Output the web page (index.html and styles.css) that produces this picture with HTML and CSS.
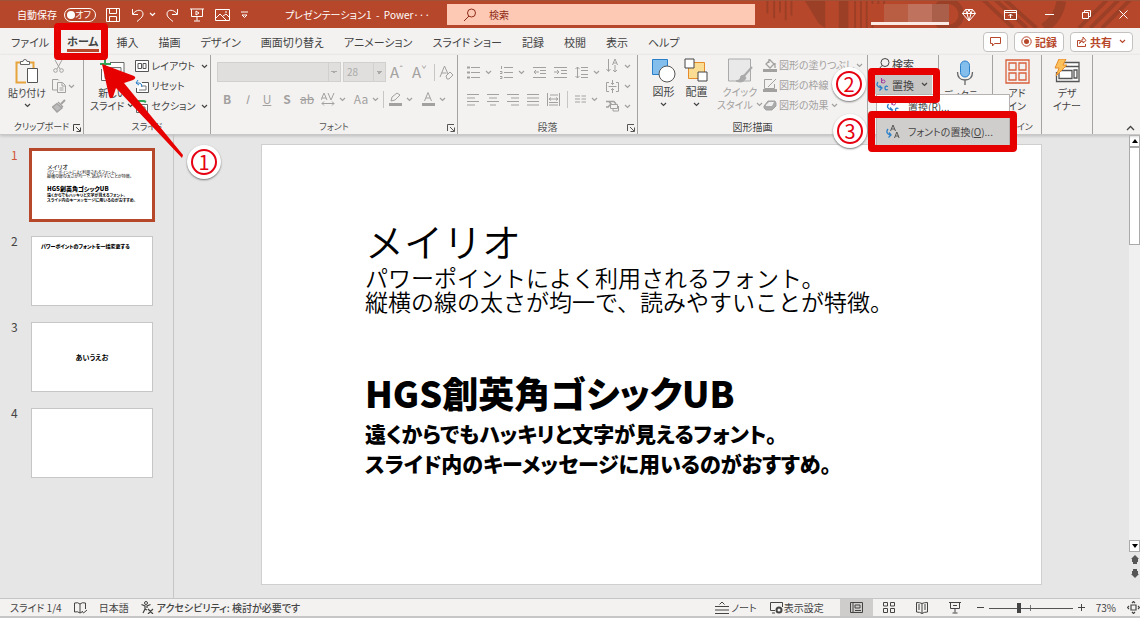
FILE: index.html
```
<!DOCTYPE html>
<html lang="ja">
<head>
<meta charset="utf-8">
<title>プレゼンテーション1 - PowerPoint</title>
<link rel="stylesheet" href="styles.css">
</head>
<body>
<svg class="defs" aria-hidden="true">
  <symbol id="chev" viewBox="0 0 7 5"><path d="M1 1l2.500 2.500L6 1" fill="none" stroke="currentColor" stroke-width="1.200"/></symbol>
  <symbol id="launch" viewBox="0 0 8 8"><path d="M.5 7V.5H7M3 3l4 4M7.500 3.500v4h-4" fill="none" stroke="currentColor"/></symbol>
</svg>
<div class="app">
  <header class="titlebar">
    <svg class="pattern" viewBox="0 0 400 28" aria-hidden="true">
      <g fill="none" stroke="#9c3f27" stroke-width="3">
        <path d="M21 0v13M28 0v18M34 0v12M40 0v20M46 0v15" stroke-width="2"/>
        <path d="M112 0v28M118 0v28M124 0v28M130 0v28M136 0v22M142 0v10" stroke-width="2"/>
        <path d="M252 -6l38 34M262 -6l38 34M242 -4l34 32" stroke-width="4"/>
        <path d="M344 28l32-32M356 28l32-32M368 28l32-32" stroke-width="4"/>
      </g>
      <path d="M60 0l14 23 7 5V0zM95 0h10v28H95z" fill="#9c3f27"/>
      <circle cx="208" cy="14" r="14" fill="none" stroke="#9c3f27" stroke-width="6"/>
      <path d="M326 0q-3 18-18 28" fill="none" stroke="#9c3f27" stroke-width="10"/>
    </svg>
    <div class="quick">
      <label class="autosave" for="autosave">自動保存</label>
      <span class="switch"><input type="checkbox" id="autosave"><span>オフ</span></span>
      <button class="tool" aria-label="保存"><svg width="14" height="14" viewBox="0 0 14 14"><path d="M.5.5h13v13H.5zM3.500.5v5h7v-5M3.500 13.500v-5h7v5" /></svg></button>
      <button class="tool undo" aria-label="元に戻す"><svg width="14" height="14" viewBox="0 0 14 14"><path d="M1.500 1v5.500H7M2 6C5 1 12 1 12 6c0 3-3 5-6 7.500"/></svg><svg width="7" height="5"><use href="#chev"/></svg></button>
      <button class="tool" aria-label="やり直し"><svg width="14" height="14" viewBox="0 0 14 14"><path d="M12.500 1v5.500H7M12 6C9 1 2 1 2 6c0 3 3 5 6 7.500"/></svg></button>
      <button class="tool" aria-label="スライドショー"><svg width="14" height="14" viewBox="0 0 14 14"><path d="M0 1h14M1.500 1v7.500h11V1M7 8.500v4M4 13h6M6 3v4l3-2z"/></svg></button>
      <button class="tool" aria-label="図"><svg width="15" height="14" viewBox="0 0 15 14"><path d="M.5 1.500h14v11H.5zM1 10l4-4 6 6M8 8l3-2 3 3M10 4h2"/></svg></button>
      <button class="tool" aria-label="カスタマイズ"><svg width="7" height="8" viewBox="0 0 7 8"><path d="M0 1h7M1 4l2.500 2.500L6 4z"/></svg></button>
    </div>
    <h1 class="doc">プレゼンテーション1 &nbsp;-&nbsp; Power···</h1>
    <div class="search"><svg width="14" height="14" viewBox="0 0 14 14"><circle cx="8.500" cy="5" r="4" fill="none" stroke="#8e2b16"/><path d="M6 8l-5 5" stroke="#8e2b16"/></svg><input type="search" placeholder="検索" aria-label="検索"></div>
    <div class="window">
      <span class="user"></span>
      <button class="tool" aria-label="Premium"><svg width="14" height="14" viewBox="0 0 14 14"><path d="M3.500 1.500h7l3 4L7 13 .5 5.500zM.5 5.500h13M3.500 1.500L5 5.500 7 13l2-7.500 1.500-4M5 5.500l2-4 2 4" /></svg></button>
      <button class="tool" aria-label="リボンの表示オプション"><svg width="13" height="10" viewBox="0 0 13 10"><path d="M.5.5h12v9H.5zM.5 2.500h12M6.500 8V4M4.500 6l2-2 2 2"/></svg></button>
      <button class="tool" aria-label="最小化"><svg width="9" height="10" viewBox="0 0 9 10"><path d="M0 4.500h9"/></svg></button>
      <button class="tool" aria-label="元に戻す(縮小)"><svg width="9" height="9" viewBox="0 0 9 9"><path d="M.5 2.500h6v6h-6zM2.500 2.500v-2h6v6h-2"/></svg></button>
      <button class="tool" aria-label="閉じる"><svg width="9" height="9" viewBox="0 0 9 9"><path d="M.5.5l8 8M8.500.5l-8 8"/></svg></button>
    </div>
  </header>

  <nav class="tabs">
    <button>ファイル</button><button class="on"><span>ホーム</span></button><button>挿入</button><button>描画</button><button>デザイン</button><button>画面切り替え</button><button>アニメーション</button><button>スライド ショー</button><button>記録</button><button>校閲</button><button>表示</button><button>ヘルプ</button>
    <div class="actions">
      <button aria-label="コメント"><svg width="11" height="10" viewBox="0 0 11 10"><path d="M.5.5h10v6h-6L2.500 9V6.500h-2z" fill="none" stroke="currentColor"/></svg></button>
      <button><svg width="11" height="11" viewBox="0 0 11 11"><circle cx="5.500" cy="5.500" r="4.700" fill="none" stroke="currentColor"/><circle cx="5.500" cy="5.500" r="2.500" fill="currentColor"/></svg>記録</button>
      <button><svg width="10" height="11" viewBox="0 0 10 11"><path d="M3 4.500H.5v6h8V8M2.500 7.500Q3 3.500 6 3.500V1l3 3.500L6 7V5Q4 5 2.500 7.500z" fill="none" stroke="currentColor"/></svg>共有<svg class="gap" width="7" height="5"><use href="#chev"/></svg></button>
    </div>
  </nav>

  <section class="ribbon">
    <div class="group kana">
      <div class="body">
        <button class="big"><svg width="24" height="25" viewBox="0 0 24 25"><path d="M7 3.500H1.500v20H11M13 3.500h5.500V9" fill="none" stroke="#e8a33d" stroke-width="2"/><path d="M5.500 5.500v-3h2.500a2 2 0 0 1 4 0h2.500v3z" fill="#fff" stroke="#666"/><path d="M12.500 9.500h10v14h-10z" fill="#fff" stroke="#555"/></svg>貼り付け<svg width="7" height="5"><use href="#chev"/></svg></button>
        <div class="stack dim">
          <button aria-label="切り取り"><svg width="13" height="14" viewBox="0 0 13 14"><path d="M3 1l5 9M10 1L5 10" fill="none" stroke="currentColor"/><circle cx="3.500" cy="11.500" r="1.800" fill="none" stroke="currentColor"/><circle cx="9.500" cy="11.500" r="1.800" fill="none" stroke="currentColor"/></svg></button>
          <button aria-label="コピー"><svg width="14" height="14" viewBox="0 0 14 14"><path d="M5 11H.5V.5H6l1 1M5.500 3.500h5l3 3v7h-8zM10 4v3h3M7.500 9h4M7.500 11h4" fill="none" stroke="currentColor"/></svg><svg width="7" height="5"><use href="#chev"/></svg></button>
          <button aria-label="書式のコピー"><svg width="14" height="14" viewBox="0 0 14 14"><path d="M13 1L9 5" stroke="currentColor" stroke-width="2"/><path d="M6 3l5 5M5 4.500L.5 8 5 13l5-4z" stroke="currentColor" stroke-width="1.300" fill="#bbb"/></svg></button>
        </div>
      </div>
      <div class="name">クリップボード<svg width="8" height="8"><use href="#launch"/></svg></div>
    </div>

    <div class="group kana">
      <div class="body">
        <button class="big"><svg width="26" height="25" viewBox="0 0 26 25"><path d="M11 3.500h14v18H2.500V10" fill="#fff" stroke="#666"/><path d="M6 8.500h16v4H6zM6 15.500h7v4H6zM15 15.500h7v4h-7z" fill="#eee" stroke="#777"/><path d="M6 0v10M1 5h11" stroke="#2fa455" stroke-width="2"/></svg>新しい<span>スライド <svg width="7" height="5"><use href="#chev"/></svg></span></button>
        <div class="stack">
          <button><svg width="14" height="12" viewBox="0 0 14 12"><path d="M.5.5h13v11H.5zM3 3.500h3.500v5H3zM8 3.500h3v5H8z" fill="#fff" stroke="#555"/></svg>レイアウト<svg class="gap" width="7" height="5"><use href="#chev"/></svg></button>
          <button><svg width="14" height="13" viewBox="0 0 14 13"><path d="M7 2.500h6.500v10H1.500V8" fill="#fff" stroke="#555"/><path d="M6 6h5v4H4" fill="none" stroke="#777"/><path d="M3 0L1 3l3 2M1 3h3q3 0 3 4" fill="none" stroke="#2a7fc9"/></svg>リセット</button>
          <button><svg width="14" height="13" viewBox="0 0 14 13"><path d="M1 1h8l2 1" fill="none" stroke="#2fa455" stroke-width="2"/><path d="M1.500 4.500h11v8h-11zM4 7h6v3H4z" fill="#fff" stroke="#666"/></svg>セクション<svg class="gap" width="7" height="5"><use href="#chev"/></svg></button>
        </div>
      </div>
      <div class="name">スライド</div>
    </div>

    <div class="group kana dim">
      <div class="body rows">
        <div class="row">
          <select class="face" aria-label="フォント" disabled><option></option></select>
          <select class="size" aria-label="フォント サイズ" disabled><option>28</option></select>
          <button class="lat l" aria-label="拡大">A<sup>ˆ</sup></button><button class="lat" aria-label="縮小">A<sup>ˇ</sup></button><i class="bar"></i>
          <button aria-label="書式のクリア"><svg width="15" height="15" viewBox="0 0 15 15"><path d="M1 12L5.500 1 9 9M2.500 8h5M7 11l4-4 3 3-4 4H8z" fill="none" stroke="currentColor"/></svg></button>
        </div>
        <div class="row fmt">
          <button><b>B</b></button><button><em>I</em></button><button><u>U</u></button><button><b>S</b></button><button><s>ab</s></button>
          <button class="wide" aria-label="文字の間隔"><svg width="14" height="14" viewBox="0 0 14 14"><path d="M0 8l3-7 3 7M1 6h4M7 1l3 7 3-7M1 11.500h12M3 9.500l-2 2 2 2M11 9.500l2 2-2 2" fill="none" stroke="currentColor"/></svg><svg width="7" height="5"><use href="#chev"/></svg></button>
          <button class="wide">Aa<svg width="7" height="5"><use href="#chev"/></svg></button><i class="bar"></i>
          <button class="wide" aria-label="蛍光ペン"><svg width="14" height="14" viewBox="0 0 14 14"><path d="M3 9l1-4 5-4 3 2-5 5z" fill="none" stroke="currentColor"/><path d="M1 11h13v3H1z" fill="currentColor"/></svg><svg width="7" height="5"><use href="#chev"/></svg></button>
          <button class="wide" aria-label="フォントの色"><svg width="14" height="14" viewBox="0 0 14 14"><path d="M3.500 9L7 .5 10.500 9M5 6h4" fill="none" stroke="currentColor"/><path d="M1 11h13v3H1z" fill="currentColor"/></svg><svg width="7" height="5"><use href="#chev"/></svg></button>
        </div>
      </div>
      <div class="name">フォント<svg width="8" height="8"><use href="#launch"/></svg></div>
    </div>

    <div class="group dim">
      <div class="body para">
        <div class="rows">
          <div class="row para1">
            <button aria-label="箇条書き"><svg width="13" height="13" viewBox="0 0 13 13"><path d="M0 1.500h3M0 6.500h3M0 11.500h3" stroke="currentColor" stroke-width="2"/><path d="M4 1.500h9M4 6.500h9M4 11.500h9" stroke="currentColor"/></svg><svg width="7" height="5"><use href="#chev"/></svg></button>
            <button aria-label="段落番号"><svg width="13" height="13" viewBox="0 0 13 13"><path d="M1.500 0v3M0 5.500h2v2H0M0 10.500h2v2H0M4 1.500h9M4 6.500h9M4 11.500h9" fill="none" stroke="currentColor"/></svg><svg width="7" height="5"><use href="#chev"/></svg></button>
            <button aria-label="インデントを減らす"><svg width="13" height="13" viewBox="0 0 13 13"><path d="M0 1.500h13M7 4.500h6M7 7.500h6M0 11.500h13M6 6H1M3 4L1 6l2 2" fill="none" stroke="currentColor"/></svg></button>
            <button aria-label="インデントを増やす"><svg width="13" height="13" viewBox="0 0 13 13"><path d="M0 1.500h13M7 4.500h6M7 7.500h6M0 11.500h13M0 6h5M3 4l2 2-2 2" fill="none" stroke="currentColor"/></svg></button>
            <button aria-label="行間"><svg width="13" height="13" viewBox="0 0 13 13"><path d="M2.500 1v11M.5 3l2-2 2 2M.5 10l2 2 2-2M6 1.500h7M6 4.500h7M6 8.500h7M6 11.500h7" fill="none" stroke="currentColor"/></svg><svg width="7" height="5"><use href="#chev"/></svg></button>
          </div>
          <div class="row para2">
            <button aria-label="左揃え"><svg width="13" height="13" viewBox="0 0 13 13"><path d="M0 1.500h12M0 5h8M0 8.500h12M0 12h8" stroke="currentColor"/></svg></button>
            <button aria-label="中央揃え"><svg width="13" height="13" viewBox="0 0 13 13"><path d="M0 1.500h12M2 5h8M0 8.500h12M3 12h6" stroke="currentColor"/></svg></button>
            <button aria-label="右揃え"><svg width="13" height="13" viewBox="0 0 13 13"><path d="M0 1.500h12M4 5h8M0 8.500h12M4 12h8" stroke="currentColor"/></svg></button>
            <button aria-label="両端揃え"><svg width="13" height="13" viewBox="0 0 13 13"><path d="M0 1.500h12M0 5h12M0 8.500h12M0 12h12" stroke="currentColor"/></svg></button>
            <button aria-label="均等割り付け"><svg width="13" height="13" viewBox="0 0 13 13"><path d="M.5 0v13M12.500 0v13M3 2h8M2 6h9M4 4.500L2 6l2 1.500M9 4.500L11 6 9 7.500M2 9.500h9M2 12h9" fill="none" stroke="currentColor"/></svg></button>
            <i class="bar"></i>
            <button aria-label="段組み"><svg width="11" height="9" viewBox="0 0 11 9"><path d="M0 1h5M0 4h5M0 7h5M6.500 1h5M6.500 4h5M6.500 7h5" stroke="currentColor"/></svg><svg width="7" height="5"><use href="#chev"/></svg></button>
          </div>
        </div>
        <div class="stack">
          <button aria-label="文字列の方向"><svg width="13" height="14" viewBox="0 0 13 14"><path d="M2.500 0v12M.5 10l2 2.500 2-2.500M9 6v7M7 11l2 2 2-2M6.500 6L9 0l2.500 6M7.500 4h3" fill="none" stroke="currentColor"/></svg><svg width="7" height="5"><use href="#chev"/></svg></button>
          <button aria-label="文字の配置"><svg width="13" height="13" viewBox="0 0 13 13"><path d="M3 2.500H.5v9H3M10 2.500h2.500v9H10M2.500 6.500h8M6.500 0v4.500M5 3l1.500 1.500L8 3M6.500 13V8.500M5 10l1.500-1.500L8 10" fill="none" stroke="currentColor"/></svg><svg width="7" height="5"><use href="#chev"/></svg></button>
          <button aria-label="SmartArt"><svg width="13" height="12" viewBox="0 0 13 12"><path d="M0 1.500h8l2 2.500M0 7h3M3 1.500L5 4 2 7" fill="none" stroke="currentColor" stroke-width="1.500"/><path d="M4.500 4.500h7v4h-7zM7 8v3h5.500V6" fill="none" stroke="currentColor"/></svg><svg width="7" height="5"><use href="#chev"/></svg></button>
        </div>
      </div>
      <div class="name">段落<svg width="8" height="8"><use href="#launch"/></svg></div>
    </div>

    <div class="group draw">
      <div class="body">
        <button class="big"><svg width="25" height="25" viewBox="0 0 25 25"><path d="M1.500 1.500h15v15h-15z" fill="#83beec" stroke="#2a7fc9"/><circle cx="16" cy="16" r="8" fill="#fff" stroke="#555"/></svg>図形<svg width="7" height="5"><use href="#chev"/></svg></button>
        <button class="big"><svg width="25" height="25" viewBox="0 0 25 25"><path d="M4.500 4.500h16v16h-16z" fill="#fbdc93" stroke="#e58b2a"/><path d="M1 1h9v9H1zM14 14h9v9h-9z" fill="#fff" stroke="#444"/></svg>配置<svg width="7" height="5"><use href="#chev"/></svg></button>
        <button class="big dim small"><svg width="26" height="25" viewBox="0 0 26 25"><path d="M1.500 1h22v22h-22z" fill="#e9e9e9" stroke="#aaa"/><path d="M25 9l-8 9" stroke="#aaa" stroke-width="2"/><path d="M17 17q-4 0-4 4-2 2-4 2 7 3 10-3z" fill="#aaa" stroke="#aaa"/></svg>クイック<span>スタイル <svg width="7" height="5"><use href="#chev"/></svg></span></button>
        <div class="stack dim">
          <button><svg width="14" height="13" viewBox="0 0 14 13"><path d="M7 1l4 4-4 4-4-4zM6 0v4M12 4v5" fill="none" stroke="currentColor" stroke-width="1.300"/><path d="M0 10h14v3H0z" fill="currentColor"/></svg>図形の塗りつぶし <svg width="7" height="5"><use href="#chev"/></svg></button>
          <button><svg width="14" height="13" viewBox="0 0 14 13"><path d="M9 .5H1.500v9h10V5M13 0L5 8" fill="none" stroke="currentColor"/><path d="M0 10h14v3H0z" fill="currentColor"/></svg>図形の枠線 <svg width="7" height="5"><use href="#chev"/></svg></button>
          <button><svg width="14" height="13" viewBox="0 0 14 13"><path d="M1 7l4-5h7l1 2v3l-4 4H3L1 9z" fill="#aaa" stroke="currentColor"/><path d="M3 6l3-3h5L9 7H3z" fill="#eee"/></svg>図形の効果 <svg width="7" height="5"><use href="#chev"/></svg></button>
        </div>
      </div>
      <div class="name">図形描画</div>
    </div>

    <div class="group edit">
      <div class="body">
        <div class="stack">
          <button class="find"><svg width="11" height="12" viewBox="0 0 11 12"><circle cx="6" cy="4.500" r="4" fill="none" stroke="#444"/><path d="M3 7.500L0 11" stroke="#444"/></svg>検索</button>
          <button class="swap"><svg width="13" height="14" viewBox="0 0 13 14"><path d="M5.500 0v5M5.500 3.500q0-1.500 1.800-1.500T9 3.500 7.300 5 5.500 3.500" fill="none" stroke="#a33a9e"/><path d="M2 4Q-1 8 5 10M3.500 7.500L6 10l-2.500 2.500M12 8.500q-3-1-3 1.500t3 1.500" fill="none" stroke="#2a7fc9" stroke-width="1.300"/></svg>置換<svg class="gap" width="7" height="5"><use href="#chev"/></svg></button>
        </div>
      </div>
      <div class="menu" role="menu">
        <button role="menuitem"><svg width="14" height="14" viewBox="0 0 13 14"><path d="M5.500 0v5M5.500 3.500q0-1.500 1.800-1.500T9 3.500 7.300 5 5.500 3.500" fill="none" stroke="#a33a9e"/><path d="M2 4Q-1 8 5 10M3.500 7.500L6 10l-2.500 2.500M12 8.500q-3-1-3 1.500t3 1.500" fill="none" stroke="#2a7fc9" stroke-width="1.300"/></svg><span>置換(R)...</span></button>
        <button role="menuitem" class="hot"><svg width="14" height="14" viewBox="0 0 14 14"><path d="M2 4Q-1 8 4 10M3 7.500L5 10l-2.500 2.500" fill="none" stroke="#2a7fc9" stroke-width="1.300"/><path d="M4.500 6L7 0l2.500 6M5.500 4h3M8.500 13l2.300-6 2.300 6M9.500 11h3" fill="none" stroke="#555"/></svg><span>フォントの置換(<u>O</u>)...</span></button>
      </div>
    </div>

    <div class="group">
      <div class="body mid dictate"><button class="big small"><svg width="18" height="26" viewBox="0 0 18 26"><rect x="4.500" y="1" width="9" height="16" rx="4.500" fill="#83beec" stroke="#2a7fc9"/><path d="M1.500 12q0 8 7.500 8t7.500-8M9 20v5" fill="none" stroke="#666" stroke-width="1.300"/></svg>ディクテー</button></div>
    </div>
    <div class="group kana">
      <div class="body mid"><button class="big"><svg width="25" height="25" viewBox="0 0 25 25"><path d="M1 1h23v23H1zM4 4h7v7H4zM14 4h7v7h-7zM4 14h7v7H4zM14 14h7v7h-7z" fill="none" stroke="#d9603b" stroke-width="1.300"/></svg>アド<span>イン</span></button></div>
      <div class="name">アドイン</div>
    </div>
    <div class="group kana">
      <div class="body mid"><button class="big"><svg width="26" height="25" viewBox="0 0 26 25"><path d="M6 3.500h19v19H2.500V13M10 7.500h15M5 11.500h13v8H5zM20 11h3v8h-3z" fill="#fff" stroke="#555" stroke-width="1.300"/><path d="M5 0h7L9 6h4L2 17l3-8H1z" fill="#fbc05a" stroke="#e58b2a"/></svg>デザ<span>イナー</span></button></div>
    </div>
    <div class="group last"><button aria-label="リボンを折りたたむ"><svg width="9" height="6" viewBox="0 0 9 6"><path d="M1 5l3.500-3.500L8 5" fill="none" stroke="#444" stroke-width="1.300"/></svg></button></div>
  </section>

  <main class="work">
    <ol class="thumbs">
      <li class="on"><span>1</span><div class="thumb">
        <p class="t-light">メイリオ</p><p class="t-thin">パワーポイントによく利用されるフォント。<br>縦横の線の太さが均一で、読みやすいことが特徴。</p>
        <p class="t-bold">HGS創英角ゴシックUB</p><p class="t-small">遠くからでもハッキリと文字が見えるフォント。<br>スライド内のキーメッセージに用いるのがおすすめ。</p></div></li>
      <li><span>2</span><div class="thumb"><p class="t-head">パワーポイントのフォントを一括変更する</p></div></li>
      <li><span>3</span><div class="thumb center"><p class="t-mid">あいうえお</p></div></li>
      <li><span>4</span><div class="thumb"></div></li>
    </ol>
    <div class="stage">
      <article class="slide">
        <h2 class="meiryo">メイリオ</h2>
        <p class="meiryo-text">パワーポイントによく利用されるフォント。<br>縦横の線の太さが均一で、読みやすいことが特徴。</p>
        <h2 class="hgs">HGS創英角ゴシックUB</h2>
        <p class="hgs-text">遠くからでもハッキリと文字が見えるフォント。<br>スライド内のキーメッセージに用いるのがおすすめ。</p>
      </article>
    </div>
    <div class="scroll">
      <button aria-label="上へ"><svg width="6" height="4"><path d="M0 4l3-4 3 4z"/></svg></button>
      <div class="track"><div class="knob"></div></div>
      <button aria-label="下へ"><svg width="6" height="4"><path d="M0 0l3 4 3-4z"/></svg></button>
      <button class="page" aria-label="前のスライド"><svg width="8" height="9" viewBox="0 0 8 9"><path d="M4 0l4 4H7v3H6v2H2V7H1V4H0z" fill="#555"/></svg></button>
      <button class="page" aria-label="次のスライド"><svg width="8" height="9" viewBox="0 0 8 9"><path d="M4 9l4-4H7V2H6V0H2v2H1v3H0z" fill="#555"/></svg></button>
    </div>
  </main>

  <footer class="status">
    <span>スライド 1/4</span>
    <button aria-label="校正"><svg width="13" height="12" viewBox="0 0 13 12"><path d="M6 2Q4 0 .5 1v9q3-1 5.500 1V2q2-2 5.500-1v6M6 11l2-1M8 9l1.500 2L13 8" fill="none" stroke="currentColor"/></svg></button>
    <span>日本語</span>
    <button class="a11y"><svg width="13" height="13" viewBox="0 0 13 13"><circle cx="5" cy="2" r="1.500" fill="none" stroke="currentColor"/><path d="M.5 3.500L4 5v3l-2 4M9.500 3.500L6 5v2M4 8l2 1M7 8l5 5M12 8l-5 5" fill="none" stroke="currentColor" stroke-width="1.200"/></svg>アクセシビリティ: 検討が必要です</button>
    <div class="views">
      <button class="notes"><svg width="14" height="13" viewBox="0 0 14 13"><path d="M0 5.500h14M0 9h14M0 12.500h14M4.500 3.500L7 1l2.500 2.500" fill="none" stroke="currentColor"/></svg>ノート</button>
      <button class="disp"><svg width="13" height="12" viewBox="0 0 13 12"><path d="M5 8.500H.5v-8h12V5M2 11h3" fill="none" stroke="currentColor"/><circle cx="9" cy="8" r="2.500" fill="none" stroke="currentColor" stroke-width="2"/></svg>表示設定</button>
      <button class="view on" aria-label="標準"><svg width="13" height="11" viewBox="0 0 13 11"><path d="M.5.5h12v10H.5zM3 .5v10M5 3h5v3H5zM5 8.500h6" fill="none" stroke="currentColor"/></svg></button>
      <button class="view" aria-label="スライド一覧"><svg width="12" height="11" viewBox="0 0 12 11"><path d="M.5.5h4v3.500h-4zM7.500.5h4v3.500h-4zM.5 6.500h4v4h-4zM7.500 6.500h4v4h-4z" fill="none" stroke="currentColor"/></svg></button>
      <button class="view" aria-label="閲覧表示"><svg width="12" height="12" viewBox="0 0 12 12"><path d="M6 1.500Q4 .5.500.5v9.500q3.500 0 5.500 1.500Q8 10 11.500 10V.5Q8 .5 6 1.500v10M2 3h2M2 5h2M2 7h2M8 3h2M8 5h2M8 7h2" fill="none" stroke="currentColor"/></svg></button>
      <button class="view" aria-label="スライド ショー"><svg width="12" height="12" viewBox="0 0 12 12"><path d="M0 .5h12M1.500.5v6h9v-6M6 6.500v4M3.500 11h5M4 3.500h4" fill="none" stroke="currentColor"/></svg></button>
      <button class="zoom" aria-label="縮小"><svg width="7" height="7"><path d="M0 3.500h7" stroke="currentColor"/></svg></button>
      <input type="range" min="0" max="100" value="35" aria-label="ズーム">
      <button class="zoom" aria-label="拡大"><svg width="7" height="7"><path d="M0 3.500h7M3.500 0v7" stroke="currentColor"/></svg></button>
      <span class="pct">73%</span>
      <button class="zoom" aria-label="ウィンドウに合わせる"><svg width="13" height="13" viewBox="0 0 13 13"><path d="M4 4h5v5H4zM5 2l1.500-1.500L8 2M5 11l1.500 1.500L8 11M2 5L.5 6.500 2 8M11 5l1.500 1.500L11 8" fill="none" stroke="currentColor" stroke-width="1.200"/></svg></button>
    </div>
  </footer>

  <div class="marks">
    <svg class="arrow" viewBox="0 0 86 98" aria-hidden="true"><path d="M4 4l32 12q3 2-1 4l-9 3 59 72-1 3-66-70-3 9q-3 3-4-1z" fill="#e60000"/></svg>
    <div class="box b1"></div><div class="box b2"></div><div class="box b3"></div>
    <div class="num n1"><span>1</span></div><div class="num n2"><span>2</span></div><div class="num n3"><span>3</span></div>
  </div>
</div>
</body>
</html>
```
FILE: styles.css
```
* { box-sizing: border-box; }
body { margin: 0; font: 11px/14px "Noto Sans CJK JP", "Noto Sans", sans-serif; font-feature-settings: "palt"; color: #444; }
button, input, select { font: inherit; font-feature-settings: inherit; color: inherit; }
button { border: 0; background: none; padding: 0; display: flex; align-items: center; white-space: nowrap; }
h1, h2, p, ol { margin: 0; padding: 0; }
svg { flex: none; display: block; }
.defs { position: absolute; width: 0; height: 0; }
.app { position: relative; display: flex; flex-direction: column; min-height: 100vh; overflow: hidden; background: #e6e6e6; }

.titlebar { position: relative; display: grid; grid-template-columns: 285fr 162fr 308fr 385fr; align-items: center; height: 28px; background: #b7472a; border-top: 1px solid #9f5238; color: #fff; }
.pattern { position: absolute; right: 0; top: 0; width: 400px; height: 27px; }
.quick { display: flex; align-items: center; padding-left: 17px; }
.autosave { width: 47px; font-size: 10px; }
.switch { display: flex; align-items: center; width: 32px; height: 14px; margin-right: 10px; padding: 0 4px 0 2px; border: 1px solid #fff; border-radius: 7px; font-size: 9px; justify-content: space-between; }
.switch input { appearance: none; width: 8px; height: 8px; margin: 0; border-radius: 50%; background: #fff; }
.tool { margin-right: 11px; }
.tool path { fill: none; stroke: currentColor; }
.undo { gap: 4px; margin-right: 9px; }
.doc { font-size: 10px; font-weight: 400; }
.search { position: relative; display: flex; align-items: center; gap: 12px; height: 21px; padding-left: 16px; background: #fdc9b5; color: #8e2b16; font-size: 10px; }
.search input { flex: 1; min-width: 0; border: 0; background: none; padding: 0; outline: 0; }
.search input::placeholder { color: #8e2b16; }
.window { position: relative; display: flex; align-items: center; justify-content: flex-end; gap: 28px; padding-right: 12px; }
.window .tool { margin: 0; }
.user { width: 78px; height: 21px; margin-right: -15px; border-bottom: 3px solid #fbe9e4; background: linear-gradient(90deg, #b7472a 0 13px, #b95d43 13px 37px, #bf735f 37px 61px, #a95f49 61px); }

.tabs { display: flex; align-items: center; height: 27px; padding-left: 1px; background: #f3f2f1; }
.tabs > button { height: 27px; padding: 0 10px; }
.tabs > .on { font-weight: 700; padding: 0 8px; }
.tabs .on span { border-bottom: 3px solid #b7472a; padding-top: 3px; line-height: 15px; }
.actions { display: flex; gap: 6px; margin-left: auto; padding-right: 7px; color: #b7472a; font-weight: 700; }
.actions button { height: 20px; padding: 0 6px; gap: 3px; border: 1px solid #c4c2c0; border-radius: 4px; background: #fff; }
.gap { margin-left: 4px; }

.ribbon { position: relative; z-index: 1; display: grid; grid-template-columns: 84fr 127fr 247fr 180fr 230fr 71fr 54fr 49fr 51fr 47fr; height: 80px; background: #f3f2f1; border-bottom: 1px solid #c8c8c8; box-shadow: 0 1px 3px #bbb; }
.group { position: relative; display: flex; flex-direction: column; min-width: 0; border-right: 1px solid #a5a3a1; }
.body { flex: 1; display: flex; gap: 6px; padding: 4px 6px 0 8px; }
.mid { justify-content: center; padding: 4px 0 0; }
.dictate { padding-top: 1px; }
.name { display: flex; justify-content: center; position: relative; white-space: nowrap; font-size: 10px; }
.name svg { position: absolute; right: 2px; top: 4px; }
.kana, .kana .name, .kana .big, .small { font-size: 10px; }
.kana .name { font-size: 9px; }
.big { flex-direction: column; align-items: center; justify-content: flex-start; line-height: 13px; color: #444; }
.big > svg:first-child { margin-bottom: 2px; }
.big > svg:last-child { margin-top: 4px; }
.big span { display: flex; align-items: center; gap: 3px; }
.stack { display: flex; flex-direction: column; gap: 6px; }
.stack button { gap: 2px; height: 14px; }
.dim, .dim .big, .dim button, .dim.big { color: #a3a1a0; }
.dim .name { color: #555; }
.rows { display: flex; flex-direction: column; gap: 7px; padding: 7px 0 0 6px; }
.row { display: flex; align-items: center; gap: 4px; height: 20px; }
.row select { appearance: none; height: 20px; border: 1px solid #d2d0ce; border-radius: 0; background: linear-gradient(45deg, transparent 50%, #aaa 50%) right 6px center / 3px 3px no-repeat, linear-gradient(135deg, #aaa 50%, transparent 50%) right 3px center / 3px 3px no-repeat, linear-gradient(#d2d0ce, #d2d0ce) right 11px center / 1px 100% no-repeat, #e1dfdd; color: #aaa; padding: 0 3px; margin: 0; opacity: 1; }
.row .face { width: 124px; margin-right: -2px; }
.row .size { width: 43px; }
.lat { width: 18px; font-size: 15px; }
.lat sup { font-size: 9px; line-height: 9px; align-self: flex-start; }
.bar { width: 1px; height: 17px; background: #c8c6c4; }
.fmt { gap: 0; }
.fmt button { width: 20px; justify-content: center; font-size: 12px; }
.fmt .wide { width: 33px; gap: 4px; }
.para { justify-content: space-between; padding: 0 10px 0 9px; }
.para .rows { padding: 7px 0 0; }
.para button { gap: 5px; }
.para .row { gap: 7px; }
.para .para1 { gap: 8px; }
.para .stack { padding-top: 4px; }
.kana:nth-child(2) .body { padding-right: 2px; gap: 1px; }
.kana:nth-child(2) .big { margin-left: -2px; }
.draw .body { padding: 3px 0 0 13px; gap: 8px; }
.draw .stack { margin-left: -8px; font-size: 10px; }
.edit { z-index: 1; }
.edit .body { padding: 2px 6px 0; }
.edit .stack { gap: 4px; width: 100%; }
.find { padding-left: 5px; }
.stack .swap { height: 19px; padding: 0 2px; gap: 3px; background: #c8c6c4; }
.menu { position: absolute; top: 39px; left: 8px; width: 134px; background: #fff; border: 1px solid #b5b3b1; font-size: 10px; }
.menu button { width: 100%; height: 23px; padding-left: 9px; gap: 8px; }
.menu .hot { height: 27px; background: #d0cecc; }
.last { border: 0; align-items: flex-end; justify-content: flex-end; padding: 0 5px 3px 0; }

.work { flex: 1; display: flex; min-height: 0; }
.thumbs { flex: none; width: 174px; padding: 13px 0 0 11px; list-style: none; border-right: 1px solid #c6c6c6; }
.thumbs li { display: flex; align-items: flex-start; gap: 12px; height: 86px; font-size: 12px; }
.thumbs li > span { width: 8px; }
.thumbs li.on > span { color: #d0583a; }
.thumb { width: 122px; height: 70px; border: 1px solid #c6c6c6; background: #fff; color: #000; overflow: hidden; white-space: nowrap; margin-top: 2px; padding: 4px 9px; }
.on .thumb { outline: 3px solid #b7472a; outline-offset: -1px; padding: 12px 0 0 15px; }
.thumb p { font-size: 4px; line-height: 4px; }
.thumb .t-light { font-size: 6px; line-height: 7px; }
.thumb .t-bold { font-size: 6px; line-height: 6px; font-weight: 900; margin-top: 8px; }
.thumb .t-small { font-weight: 700; line-height: 5px; margin-top: 1px; }
.thumb .t-head { font-size: 5px; line-height: 10px; font-weight: 900; }
.thumb .t-mid { font-size: 7px; line-height: 9px; font-weight: 700; }
.center { display: flex; align-items: center; justify-content: center; }
.stage { flex: 1; display: flex; justify-content: center; align-items: flex-start; padding: 9px 87px 0; }
.slide { width: 100%; aspect-ratio: 780 / 440; background: #fff; border: 1px solid #cfcfcf; padding: 70px 0 0 103px; color: #000; white-space: nowrap; overflow: hidden; }
.meiryo { font-size: 39px; line-height: 50px; font-weight: 350; font-feature-settings: normal; }
.meiryo-text { font-size: 23px; line-height: 24px; font-weight: 350; font-feature-settings: normal; }
.hgs { font-size: 36px; line-height: 51px; font-weight: 900; margin-top: 54px; }
.hgs-text { font-size: 21px; line-height: 30px; font-weight: 900; }
.scroll { flex: none; width: 11px; display: flex; flex-direction: column; padding-bottom: 18px; }
.scroll button { height: 12px; justify-content: center; border: 1px solid #aaa; background: #fff; }
.scroll .page { border: 0; background: none; height: 14px; }
.track { flex: 1; background: #f0f0f0; }
.knob { height: 98px; background: #fff; border: 1px solid #aaa; }

.status { display: flex; align-items: center; height: 20px; padding-left: 10px; gap: 12px; background: #f3f2f1; border-top: 1px solid #c6c6c6; border-bottom: 2px solid #c6c6c6; white-space: nowrap; font-size: 10px; }
.a11y { gap: 3px; font-weight: 500; }
.views { display: flex; align-items: center; margin-left: auto; }
.views .notes { gap: 2px; margin-right: 13px; }
.views .disp { gap: 1px; margin-right: 16px; }
.view { width: 33px; height: 17px; justify-content: center; }
.view.on { background: #cfcdcb; }
.zoom { margin: 0 0 0 5px; }
.views input { appearance: none; width: 84px; height: 10px; margin: 0 0 0 5px; background: linear-gradient(#555, #555) 0 5px / 100% 1px no-repeat, linear-gradient(#777, #777) 50% 50% / 1px 6px no-repeat; }
.views input::-webkit-slider-thumb { appearance: none; width: 4px; height: 10px; background: #444; }
.pct { margin: 0 6px 0 11px; }

.marks { position: absolute; inset: 0; z-index: 2; pointer-events: none; }
.box { position: absolute; border: 7px solid #e60000; border-radius: 4px; }
.b1 { left: 54px; top: 23px; width: 54px; height: 37px; }
.b2 { left: 868px; top: 68px; width: 72px; height: 35px; }
.b3 { left: 868px; top: 111px; width: 149px; height: 41px; }
.arrow { position: absolute; left: 98px; top: 60px; width: 86px; height: 98px; }
.num { position: absolute; width: 34px; height: 34px; padding: 4px; border-radius: 50%; background: #fff; box-shadow: 0 1px 2px #777; }
.num span { display: flex; align-items: center; justify-content: center; height: 26px; border: 2px solid #e60012; border-radius: 50%; color: #e60012; font-size: 20px; font-weight: 400; }
.n1 { left: 187px; top: 145px; }
.n2 { left: 832px; top: 67px; }
.n3 { left: 833px; top: 114px; }
```
